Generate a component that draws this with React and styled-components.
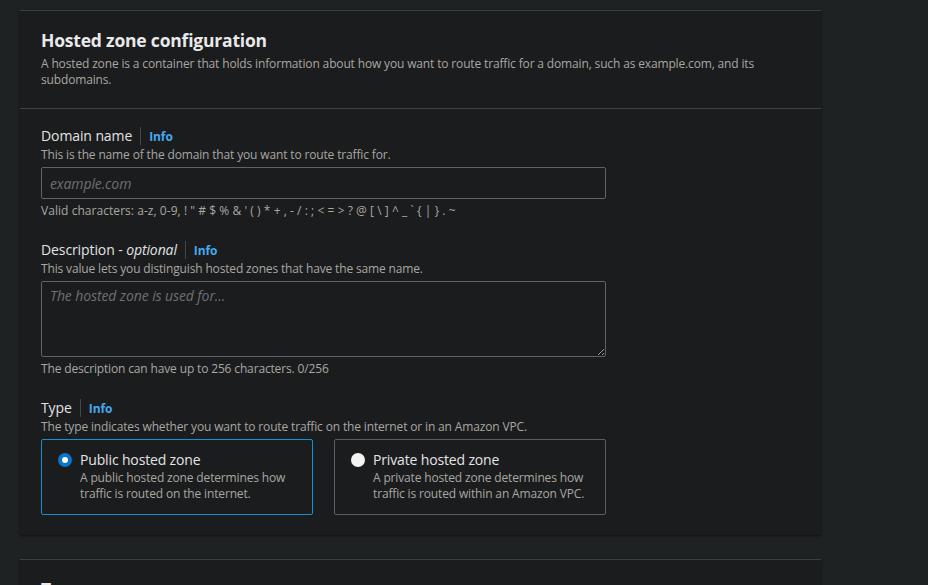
import React from "react";
import styled, { createGlobalStyle } from "styled-components";

const Global = createGlobalStyle`
  html, body { margin: 0; padding: 0; background: #1f2223; }
  body { font-family: "Open Sans", "Noto Sans", sans-serif; color: #d5d5d5; }
  * { box-sizing: border-box; }
`;

const Page = styled.div`
  width: 928px;
  height: 585px;
  overflow: hidden;
  padding: 10px 0 0 20px;
  display: flex;
  flex-direction: column;
  gap: 24px;
`;

const Card = styled.section`
  width: 801px;
  background: #1b1c1e;
  border-top: 1px solid #3d4043;
  box-shadow: 0 1px 2px rgba(0, 0, 0, 0.55);
`;

const Header = styled.header`
  padding: 18px 20px 20px 21px;
  border-bottom: 1px solid #3f4245;
`;

const Title = styled.h2`
  margin: 0 0 5px;
  font-size: 17.5px;
  line-height: 22px;
  font-weight: 700;
  color: #e9e9e9;
  letter-spacing: -0.2px;
`;

const Desc = styled.p`
  margin: 0;
  font-size: 12px;
  line-height: 16px;
  color: #a9a7a2;
  letter-spacing: -0.15px;
`;

const Body = styled.div`
  padding: 16px 20px 20px 21px;
  display: flex;
  flex-direction: column;
  gap: 20px;
`;

const Field = styled.div`
  display: flex;
  flex-direction: column;
  width: 565px;
`;

const LabelRow = styled.div`
  display: flex;
  align-items: center;
  height: 22px;
`;

const Label = styled.span`
  font-size: 14px;
  line-height: 20px;
  color: #e2e2e2;
  letter-spacing: -0.1px;
  em { font-style: italic; }
`;

const Divider = styled.span`
  width: 1px;
  height: 18px;
  background: #44484b;
  margin: 0 8px;
`;

const Info = styled.a`
  font-size: 12px;
  font-weight: 700;
  color: #44a9ef;
  text-decoration: none;
  letter-spacing: -0.1px;
`;

const Hint = styled(Desc)`
  margin-top: 4px;
  letter-spacing: ${(p) => p.$spacing || "-0.15px"};
`;

const Input = styled.input`
  margin-top: 4px;
  width: 565px;
  height: 32px;
  background: #1b1c1e;
  border: 1px solid #5f6366;
  border-radius: 2px;
  padding: 0 8px;
  font-family: inherit;
  font-size: 14px;
  color: #ddd;
  outline: none;
  &::placeholder { color: #6e7073; font-style: italic; letter-spacing: -0.1px; }
`;

const TextArea = styled.textarea`
  margin-top: 4px;
  width: 565px;
  height: 76px;
  background: #1b1c1e;
  border: 1px solid #5f6366;
  border-radius: 2px;
  padding: 4px 8px;
  font-family: inherit;
  font-size: 14px;
  line-height: 20px;
  color: #ddd;
  outline: none;
  resize: vertical;
  display: block;
  &::placeholder { color: #6e7073; font-style: italic; letter-spacing: -0.1px; }
`;

const Options = styled.div`
  margin-top: 4px;
  display: grid;
  grid-template-columns: 272px 272px;
  gap: 21px;
`;

const Option = styled.label`
  height: 76px;
  border: 1px solid ${(p) => (p.$selected ? "#1591cd" : "#5b5f62")};
  border-radius: 2px;
  padding: 10px 12px 0 16px;
  display: flex;
  gap: 8px;
  cursor: pointer;
`;

const Radio = styled.span`
  flex: none;
  width: 14px;
  height: 14px;
  margin-top: 3px;
  border-radius: 50%;
  background: ${(p) => (p.$checked ? "#0b74c9" : "#f4f4f4")};
  display: flex;
  align-items: center;
  justify-content: center;
  &::after {
    content: "";
    width: 6px;
    height: 6px;
    border-radius: 50%;
    background: ${(p) => (p.$checked ? "#ffffff" : "transparent")};
  }
`;

const OptText = styled.div`
  display: flex;
  flex-direction: column;
`;

const OptTitle = styled.span`
  font-size: 14px;
  line-height: 20px;
  color: #e4e4e4;
  letter-spacing: -0.15px;
`;

const NextTitle = styled(Title)`
  margin: 0;
  padding: 18px 20px 0 21px;
`;

export default function App() {
  return (
    <>
      <Global />
      <Page>
        <Card>
          <Header>
            <Title>Hosted zone configuration</Title>
            <Desc>
              A hosted zone is a container that holds information about how you want to route traffic for a domain, such as example.com, and its
              <br />
              subdomains.
            </Desc>
          </Header>
          <Body>
            <Field>
              <LabelRow>
                <Label>Domain name</Label>
                <Divider />
                <Info href="#">Info</Info>
              </LabelRow>
              <Desc>This is the name of the domain that you want to route traffic for.</Desc>
              <Input placeholder="example.com" />
              <Hint $spacing="0.05px">
                Valid characters: a-z, 0-9, ! " # $ % &amp; ' ( ) * + , - / : ; &lt; = &gt; ? @ [ \ ] ^ _ ` {"{"} | {"}"} . ~
              </Hint>
            </Field>
            <Field>
              <LabelRow>
                <Label>
                  Description - <em>optional</em>
                </Label>
                <Divider />
                <Info href="#">Info</Info>
              </LabelRow>
              <Desc>This value lets you distinguish hosted zones that have the same name.</Desc>
              <TextArea placeholder="The hosted zone is used for..." />
              <Hint>The description can have up to 256 characters. 0/256</Hint>
            </Field>
            <Field>
              <LabelRow>
                <Label>Type</Label>
                <Divider />
                <Info href="#">Info</Info>
              </LabelRow>
              <Desc>The type indicates whether you want to route traffic on the internet or in an Amazon VPC.</Desc>
              <Options>
                <Option $selected>
                  <Radio $checked />
                  <OptText>
                    <OptTitle>Public hosted zone</OptTitle>
                    <Desc>
                      A public hosted zone determines how
                      <br />
                      traffic is routed on the internet.
                    </Desc>
                  </OptText>
                </Option>
                <Option>
                  <Radio />
                  <OptText>
                    <OptTitle>Private hosted zone</OptTitle>
                    <Desc>
                      A private hosted zone determines how
                      <br />
                      traffic is routed within an Amazon VPC.
                    </Desc>
                  </OptText>
                </Option>
              </Options>
            </Field>
          </Body>
        </Card>
        <Card>
          <NextTitle>Tags</NextTitle>
        </Card>
      </Page>
    </>
  );
}
